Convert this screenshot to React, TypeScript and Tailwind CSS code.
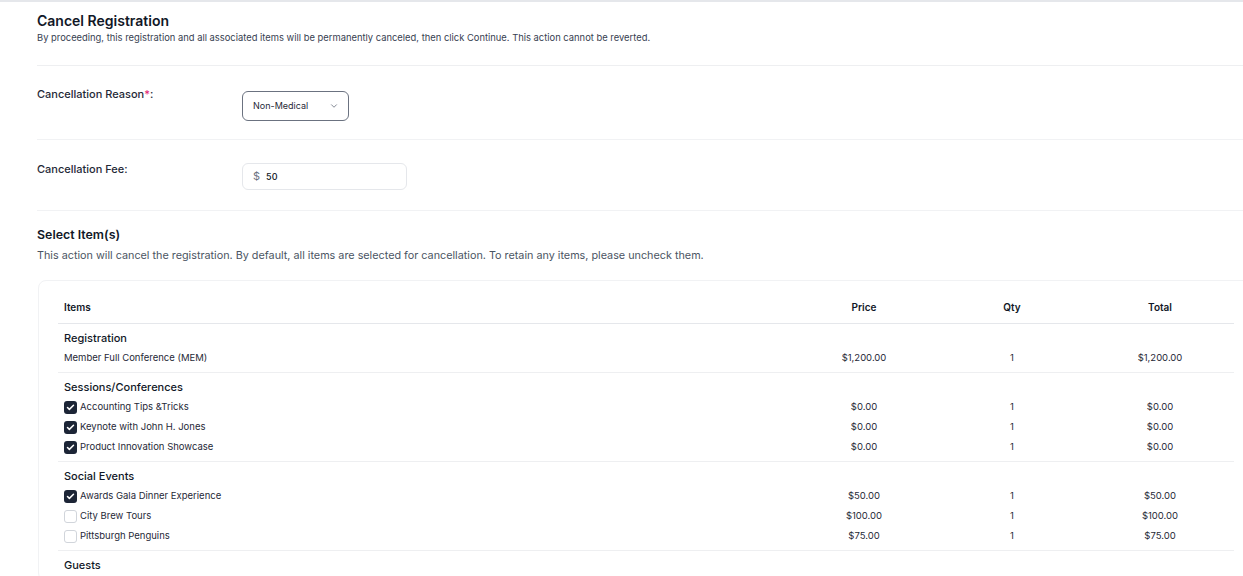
import { ChevronDown, Check } from 'lucide-react';

interface Item {
  name: string;
  price: string;
  qty: number;
  total: string;
  checkbox?: boolean;
  checked?: boolean;
}

interface Section {
  title: string;
  items: Item[];
}

const sections: Section[] = [
  {
    title: 'Registration',
    items: [{ name: 'Member Full Conference (MEM)', price: '$1,200.00', qty: 1, total: '$1,200.00' }],
  },
  {
    title: 'Sessions/Conferences',
    items: [
      { name: 'Accounting Tips &Tricks', price: '$0.00', qty: 1, total: '$0.00', checkbox: true, checked: true },
      { name: 'Keynote with John H. Jones', price: '$0.00', qty: 1, total: '$0.00', checkbox: true, checked: true },
      { name: 'Product Innovation Showcase', price: '$0.00', qty: 1, total: '$0.00', checkbox: true, checked: true },
    ],
  },
  {
    title: 'Social Events',
    items: [
      { name: 'Awards Gala Dinner Experience', price: '$50.00', qty: 1, total: '$50.00', checkbox: true, checked: true },
      { name: 'City Brew Tours', price: '$100.00', qty: 1, total: '$100.00', checkbox: true, checked: false },
      { name: 'Pittsburgh Penguins', price: '$75.00', qty: 1, total: '$75.00', checkbox: true, checked: false },
    ],
  },
  { title: 'Guests', items: [] },
];

function Checkbox({ checked }: { checked?: boolean }) {
  return checked ? (
    <span className="flex h-[13px] w-[13px] items-center justify-center rounded-[3px] bg-[#1c2536]">
      <Check className="h-[9px] w-[9px] text-white" strokeWidth={4} />
    </span>
  ) : (
    <span className="h-[13px] w-[13px] rounded-[3px] border border-[#d1d5db] bg-white" />
  );
}

export default function App() {
  return (
    <div className="w-[1243px] h-[576px] overflow-hidden bg-white font-['Inter',sans-serif] text-[#1f2937] border-t-2 border-[#e5e7eb]">
      <div className="pl-[37px]">
        {/* Header */}
        <div className="pt-[9px] pb-[20px] border-b border-[#eeeff1]">
          <h1 className="text-[14px] leading-[20px] font-semibold text-[#111827]">Cancel Registration</h1>
          <p className="text-[9.4px] leading-[14px] text-[#374151]">
            By proceeding, this registration and all associated items will be permanently canceled, then click Continue. This action cannot be reverted.
          </p>
        </div>

        {/* Cancellation reason */}
        <div className="flex pt-[20px] pb-[18px] border-b border-[#f1f2f4]">
          <label className="w-[205px] text-[11px] leading-[16px] font-medium text-[#1f2937]">
            Cancellation Reason<span className="text-[#e11d74]">*</span>:
          </label>
          <button className="mt-[5px] flex h-[30px] w-[107px] items-center justify-between rounded-md border border-[#6b7280] pl-[10px] pr-[9px] text-[9px] text-[#1f2937]">
            Non-Medical
            <ChevronDown className="h-[10px] w-[10px] text-[#6b7280]" />
          </button>
        </div>

        {/* Cancellation fee */}
        <div className="flex pt-[21px] pb-[20px] border-b border-[#f1f2f4]">
          <label className="w-[205px] text-[11px] leading-[16px] font-medium text-[#1f2937]">Cancellation Fee:</label>
          <div className="mt-[2px] flex h-[27px] w-[165px] items-center gap-[6px] rounded-md border border-[#e5e7eb] px-[10px]">
            <span className="text-[11px] text-[#6b7280]">$</span>
            <span className="text-[9px] font-medium text-[#111827]">50</span>
          </div>
        </div>

        {/* Select items */}
        <div className="pt-[16px]">
          <h2 className="text-[12.4px] leading-[16px] font-semibold text-[#111827]">Select Item(s)</h2>
          <p className="mt-[6px] text-[10.8px] leading-[14px] text-[#4b5563]">
            This action will cancel the registration. By default, all items are selected for cancellation. To retain any items, please uncheck them.
          </p>
        </div>

        <div className="mt-[17px] ml-px w-[1216px] rounded-lg border border-[#f1f2f4] px-[19px]">
          <div className="grid grid-cols-[1fr_148px_148px_148px] items-center border-b border-[#e5e7eb] pt-[18px] pb-[8px] text-[10px] leading-[16px] font-semibold text-[#111827]">
            <span className="pl-[6px]">Items</span>
            <span className="text-center">Price</span>
            <span className="text-center">Qty</span>
            <span className="text-center">Total</span>
          </div>
          {sections.map((section) => (
            <div key={section.title} className="border-b border-[#eeeff1] py-1">
              <div className="flex h-[20px] items-center pl-[6px] text-[11px] font-medium text-[#111827]">
                {section.title}
              </div>
              {section.items.map((item) => (
                <div
                  key={item.name}
                  className="grid h-[20px] grid-cols-[1fr_148px_148px_148px] items-center text-[9.5px] text-[#1f2937]"
                >
                  <span className="flex items-center gap-[3px] pl-[6px]">
                    {item.checkbox && <Checkbox checked={item.checked} />}
                    {item.name}
                  </span>
                  <span className="text-center">{item.price}</span>
                  <span className="text-center">{item.qty}</span>
                  <span className="text-center">{item.total}</span>
                </div>
              ))}
            </div>
          ))}
        </div>
      </div>
    </div>
  );
}
